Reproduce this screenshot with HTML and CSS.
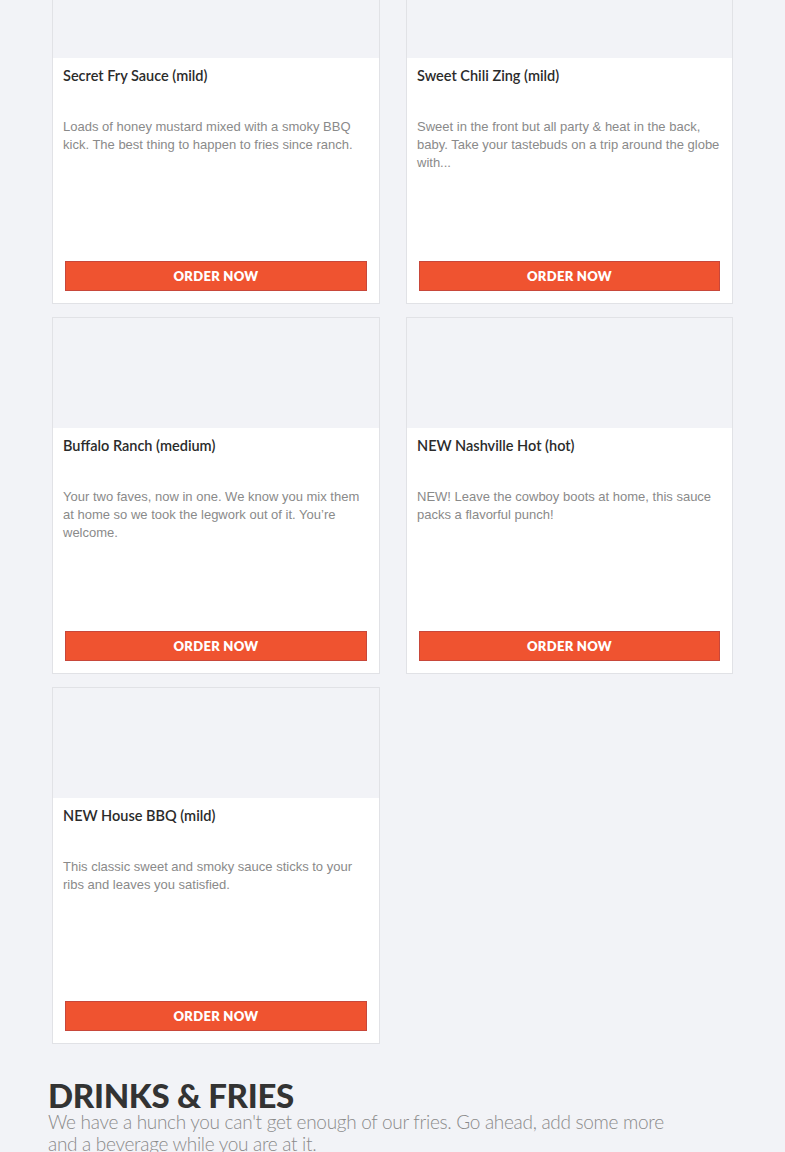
FILE: index.html
```html
<!DOCTYPE html>
<html lang="en">
<head>
<meta charset="utf-8">
<title>Sauces</title>
<link rel="stylesheet" href="styles.css">
</head>
<body>
<main class="page">
  <section class="grid">
    <article class="card">
      <div class="card-img"></div>
      <div class="card-body">
        <h3 class="card-title">Secret Fry Sauce (mild)</h3>
        <p class="card-desc">Loads of honey mustard mixed with a smoky BBQ kick. The best thing to happen to fries since ranch.</p>
        <button class="btn">ORDER NOW</button>
      </div>
    </article>
    <article class="card">
      <div class="card-img"></div>
      <div class="card-body">
        <h3 class="card-title">Sweet Chili Zing (mild)</h3>
        <p class="card-desc">Sweet in the front but all party &amp; heat in the back, baby. Take your tastebuds on a trip around the globe with...</p>
        <button class="btn">ORDER NOW</button>
      </div>
    </article>
    <article class="card">
      <div class="card-img"></div>
      <div class="card-body">
        <h3 class="card-title">Buffalo Ranch (medium)</h3>
        <p class="card-desc">Your two faves, now in one. We know you mix them at home so we took the legwork out of it. You’re welcome.</p>
        <button class="btn">ORDER NOW</button>
      </div>
    </article>
    <article class="card">
      <div class="card-img"></div>
      <div class="card-body">
        <h3 class="card-title">NEW Nashville Hot (hot)</h3>
        <p class="card-desc">NEW! Leave the cowboy boots at home, this sauce packs a flavorful punch!</p>
        <button class="btn">ORDER NOW</button>
      </div>
    </article>
    <article class="card">
      <div class="card-img"></div>
      <div class="card-body">
        <h3 class="card-title">NEW House BBQ (mild)</h3>
        <p class="card-desc">This classic sweet and smoky sauce sticks to your ribs and leaves you satisfied.</p>
        <button class="btn">ORDER NOW</button>
      </div>
    </article>
  </section>
  <section class="section-head">
    <h2 class="section-title">DRINKS &amp; FRIES</h2>
    <p class="section-sub">We have a hunch you can't get enough of our fries. Go ahead, add some more and a beverage while you are at it.</p>
  </section>
</main>
</body>
</html>
```

FILE: styles.css
```css
html, body {
  margin: 0;
  padding: 0;
  background: #f2f3f7;
}

body {
  font-family: "Liberation Sans", Arial, sans-serif;
  overflow: hidden;
}

.page {
  margin-top: -53px;
  padding-left: 48px;
}

.grid {
  display: grid;
  grid-template-columns: 328px 327px;
  column-gap: 26px;
  row-gap: 13px;
  padding-left: 4px;
}

.card {
  height: 357px;
  box-sizing: border-box;
  border: 1px solid #e1e2e6;
  background: #ffffff;
  display: flex;
  flex-direction: column;
}

.card-img {
  height: 110px;
  background: #f2f3f7;
  flex: none;
}

.card-body {
  flex: 1;
  display: flex;
  flex-direction: column;
  padding: 9px 12px 12px 10px;
}

.card-title {
  margin: 0;
  font-family: Lato, "Noto Sans", sans-serif;
  font-weight: 600;
  font-size: 14.5px;
  line-height: 18px;
  color: #2b2b2b;
}

.card-desc {
  margin: 33px 0 0 0;
  font-size: 13px;
  line-height: 18px;
  color: #8a8a8a;
}

.btn {
  margin-top: auto;
  margin-left: 2px;
  height: 30px;
  box-sizing: border-box;
  border: 1px solid #c8473a;
  background: #ef5330;
  color: #ffffff;
  font-family: Lato, "Noto Sans", sans-serif;
  font-weight: 800;
  font-size: 13px;
  letter-spacing: 0.3px;
  padding: 0;
  cursor: pointer;
}

.section-head {
  margin-top: 35px;
  max-width: 640px;
}

.section-title {
  margin: 0;
  font-family: Lato, "Noto Sans", sans-serif;
  font-weight: 900;
  font-size: 33px;
  line-height: 32px;
  letter-spacing: -0.3px;
  color: #333333;
}

.section-sub {
  margin: 0;
  font-family: Lato, "Noto Sans", sans-serif;
  font-weight: 300;
  font-size: 19px;
  line-height: 22px;
  letter-spacing: -0.3px;
  color: #8a8a8a;
}
```
